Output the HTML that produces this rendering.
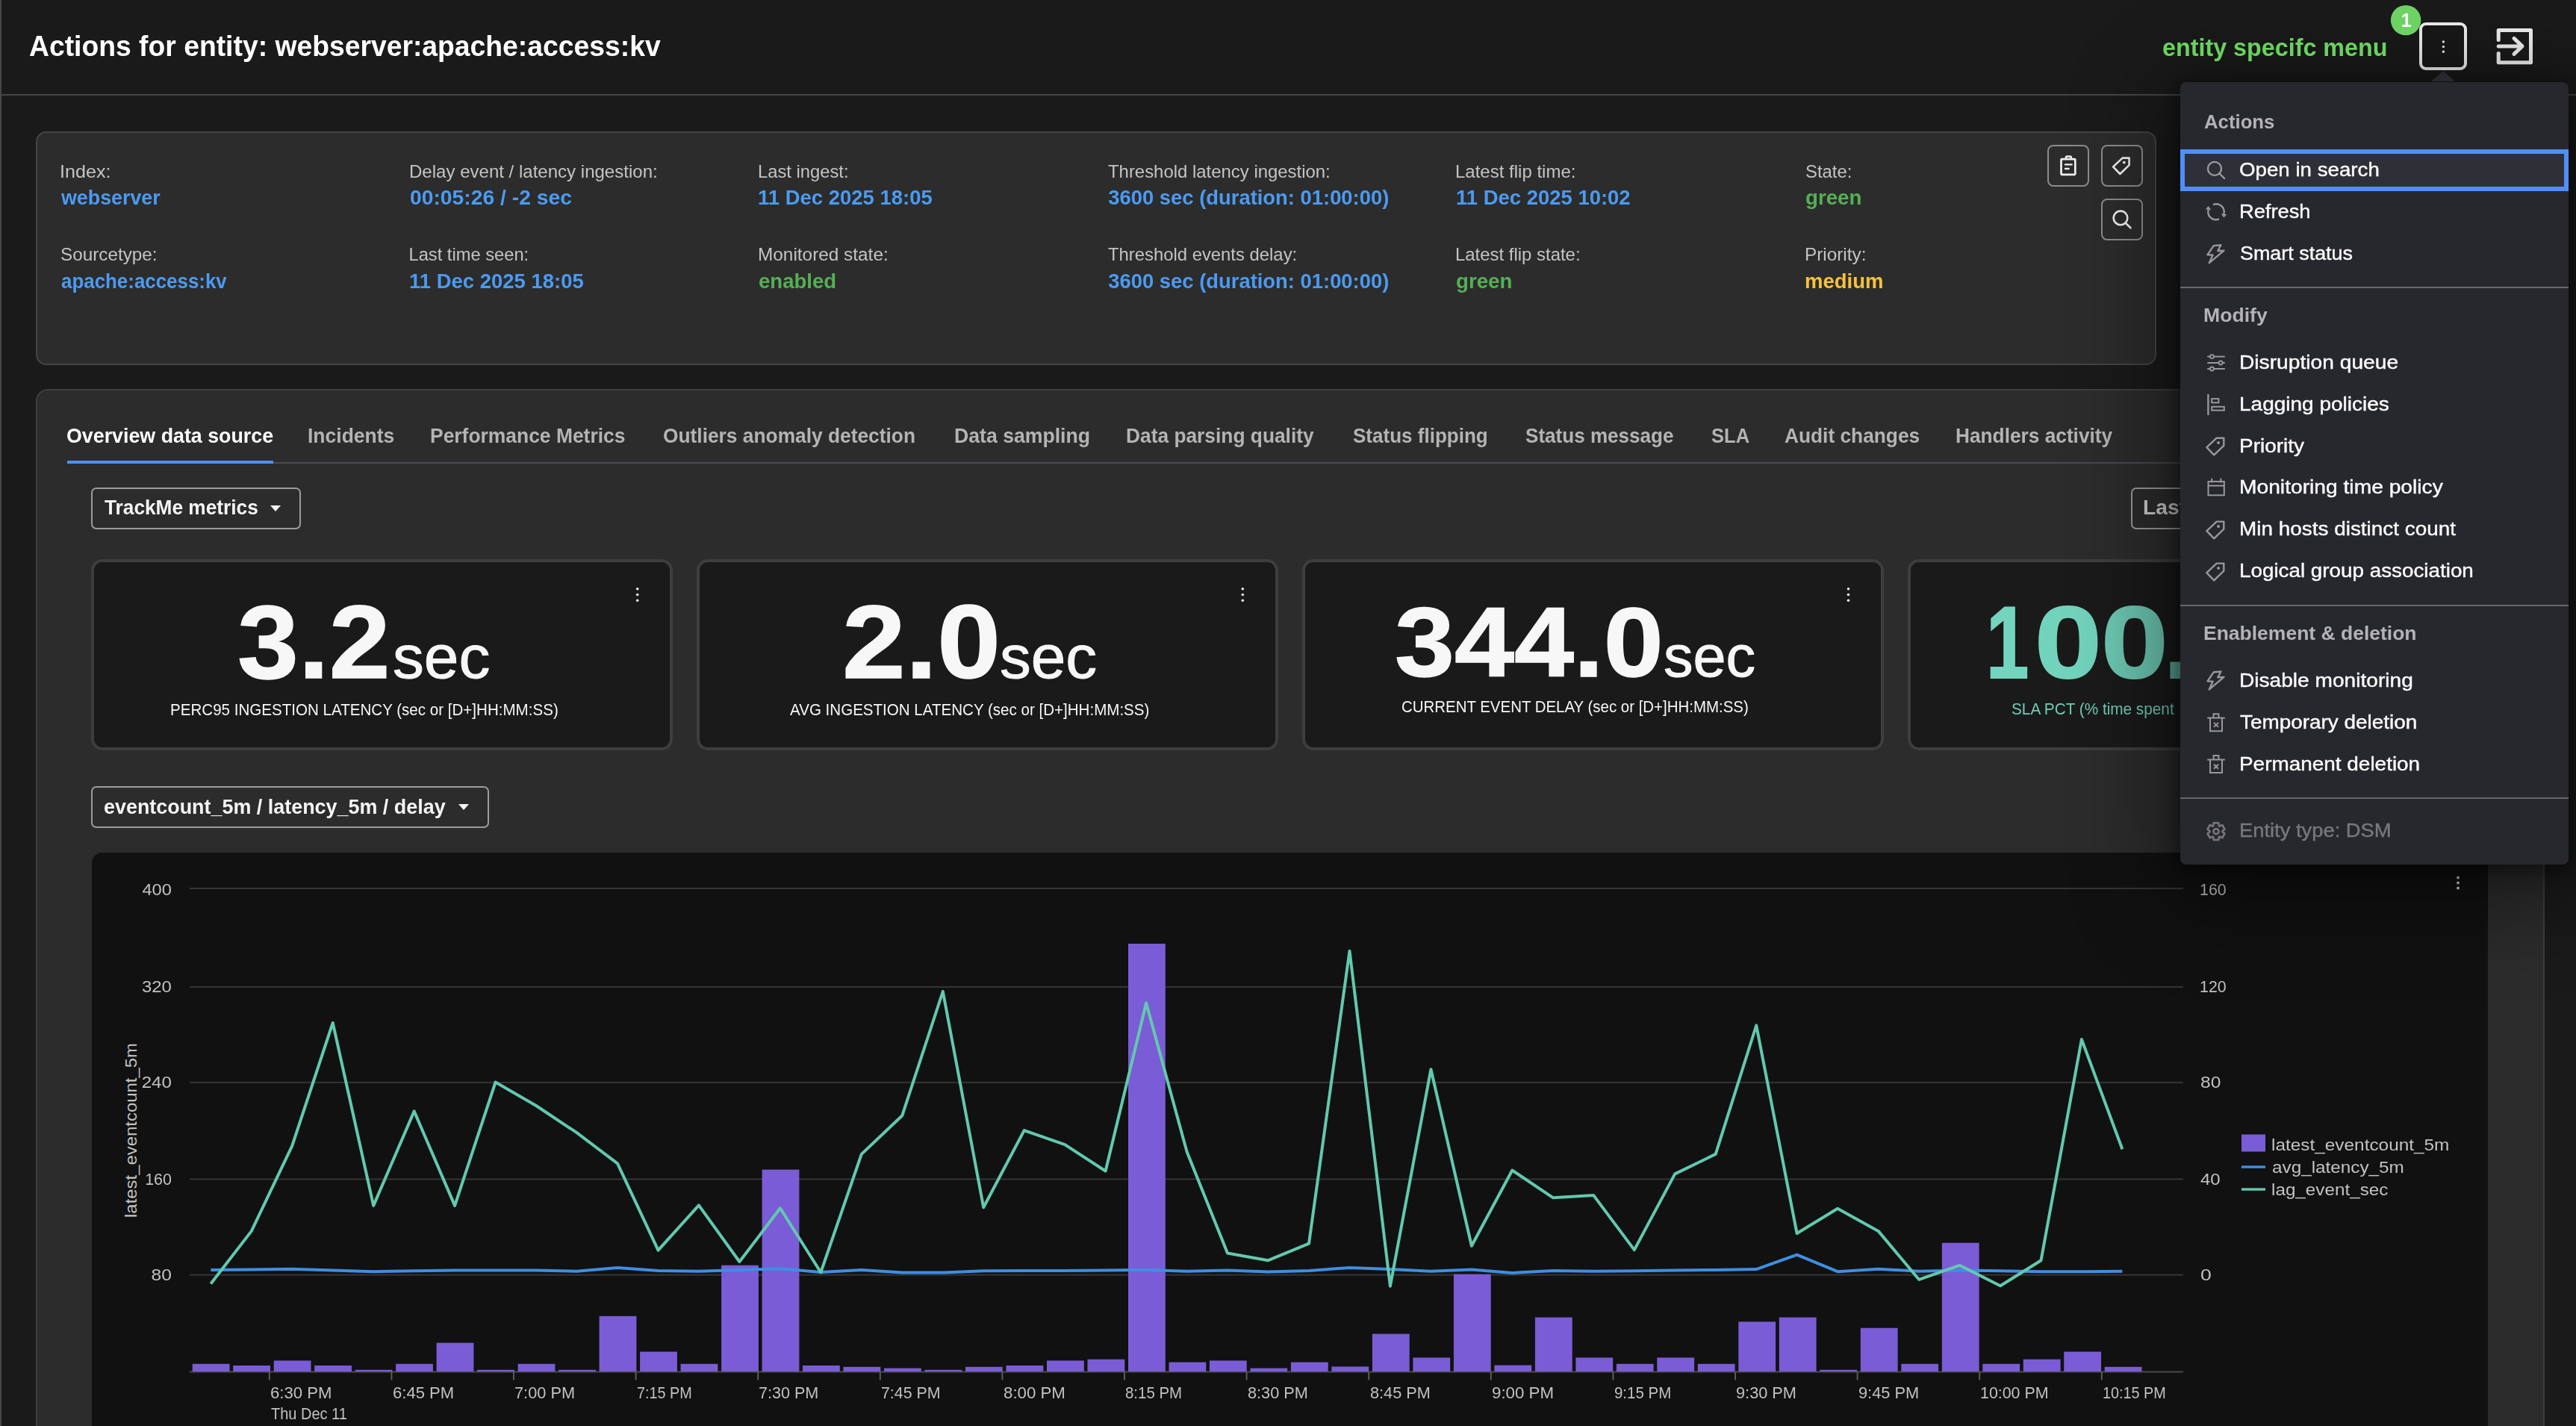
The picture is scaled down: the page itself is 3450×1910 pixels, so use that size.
<!DOCTYPE html><html><head><meta charset="utf-8"><title>Actions for entity</title><style>
html,body{margin:0;padding:0}
body{width:3450px;height:1910px;overflow:hidden;position:relative;background:#1a1a1a;font-family:"Liberation Sans",sans-serif}
.t{position:absolute;white-space:nowrap;line-height:1;display:block}
.b{position:absolute;box-sizing:border-box}
.tl{position:absolute;left:0;top:0;width:3450px;height:1910px;will-change:transform}
.kpi{border:4px solid #3e3e3e;border-radius:15px;background:#1a1a1a;top:749px;height:256px}
.dd{border:2px solid #9c9c9c;border-radius:7px}
.ib{border:2px solid #8c8c8c;border-radius:8px;width:56px;height:56px}
.mdiv{left:2920px;width:520px;height:2px;background:#67686d}
</style></head><body>
<div class="b" style="left:0;top:0;width:2px;height:1910px;background:#484848"></div>
<div class="b" style="left:0;top:126px;width:3450px;height:2px;background:#464646"></div>
<div class="b" style="left:48px;top:176px;width:2840px;height:313px;border:2px solid #444444;border-radius:14px;background:#2c2c2c"></div>
<div class="b ib" style="left:2742px;top:194px"></div><div class="b ib" style="left:2814px;top:194px"></div><div class="b ib" style="left:2814px;top:266px"></div>
<div class="b" style="left:48px;top:521px;width:3360px;height:1500px;border:2px solid #3f3f3f;border-radius:16px;background:#2c2c2c"></div>
<div class="b" style="left:90px;top:619px;width:3276px;height:2px;background:#4a4a52"></div>
<div class="b" style="left:90px;top:617px;width:276px;height:4px;background:#4f8ff7"></div>
<div class="b dd" style="left:122px;top:653px;width:281px;height:56px"></div>
<div class="b" style="left:362px;top:677px;width:0;height:0;border-left:7px solid transparent;border-right:7px solid transparent;border-top:8.5px solid #f5f5f5"></div>
<div class="b dd" style="left:2854px;top:653px;width:300px;height:56px"></div>
<div class="b dd" style="left:122px;top:1053px;width:533px;height:56px"></div>
<div class="b" style="left:613.6px;top:1077px;width:0;height:0;border-left:7px solid transparent;border-right:7px solid transparent;border-top:8.5px solid #f5f5f5"></div>
<div class="b kpi" style="left:122px;width:779px"></div>
<div class="b kpi" style="left:933px;width:779px"></div>
<div class="b kpi" style="left:1744px;width:779px"></div>
<div class="b kpi" style="left:2555px;width:779px"></div>
<div class="b" style="left:123px;top:1142px;width:3209px;height:900px;border-radius:14px;background:#111111"></div>
<svg style="position:absolute;left:0;top:0" width="3450" height="1910" viewBox="0 0 3450 1910"><rect x="253.8" y="1189.0" width="2670.2" height="2" fill="#353535"/><rect x="253.8" y="1320.9" width="2670.2" height="2" fill="#353535"/><rect x="253.8" y="1448.9" width="2670.2" height="2" fill="#353535"/><rect x="253.8" y="1578.4" width="2670.2" height="2" fill="#353535"/><rect x="253.8" y="1706.6" width="2670.2" height="2" fill="#353535"/><rect x="253.8" y="1836.5" width="2670.2" height="2" fill="#4a4a4a"/><rect x="359.8" y="1837.5" width="2" height="11" fill="#5a5a5a"/><rect x="523.4" y="1837.5" width="2" height="11" fill="#5a5a5a"/><rect x="687.0" y="1837.5" width="2" height="11" fill="#5a5a5a"/><rect x="850.6" y="1837.5" width="2" height="11" fill="#5a5a5a"/><rect x="1014.2" y="1837.5" width="2" height="11" fill="#5a5a5a"/><rect x="1177.8" y="1837.5" width="2" height="11" fill="#5a5a5a"/><rect x="1341.4" y="1837.5" width="2" height="11" fill="#5a5a5a"/><rect x="1505.0" y="1837.5" width="2" height="11" fill="#5a5a5a"/><rect x="1668.6" y="1837.5" width="2" height="11" fill="#5a5a5a"/><rect x="1832.2" y="1837.5" width="2" height="11" fill="#5a5a5a"/><rect x="1995.8" y="1837.5" width="2" height="11" fill="#5a5a5a"/><rect x="2159.4" y="1837.5" width="2" height="11" fill="#5a5a5a"/><rect x="2323.0" y="1837.5" width="2" height="11" fill="#5a5a5a"/><rect x="2486.6" y="1837.5" width="2" height="11" fill="#5a5a5a"/><rect x="2650.2" y="1837.5" width="2" height="11" fill="#5a5a5a"/><rect x="2813.8" y="1837.5" width="2" height="11" fill="#5a5a5a"/><rect x="257.7" y="1826.8" width="49.8" height="10.2" fill="#7a5cd6"/><rect x="312.2" y="1829.0" width="49.8" height="8.0" fill="#7a5cd6"/><rect x="366.7" y="1822.4" width="49.8" height="14.6" fill="#7a5cd6"/><rect x="421.2" y="1829.0" width="49.8" height="8.0" fill="#7a5cd6"/><rect x="475.7" y="1834.8" width="49.8" height="2.2" fill="#7a5cd6"/><rect x="530.1" y="1826.8" width="49.8" height="10.2" fill="#7a5cd6"/><rect x="584.6" y="1798.6" width="49.8" height="38.4" fill="#7a5cd6"/><rect x="639.1" y="1834.8" width="49.8" height="2.2" fill="#7a5cd6"/><rect x="693.6" y="1826.8" width="49.8" height="10.2" fill="#7a5cd6"/><rect x="748.1" y="1834.8" width="49.8" height="2.2" fill="#7a5cd6"/><rect x="802.6" y="1762.8" width="49.8" height="74.2" fill="#7a5cd6"/><rect x="857.1" y="1810.5" width="49.8" height="26.5" fill="#7a5cd6"/><rect x="911.6" y="1826.8" width="49.8" height="10.2" fill="#7a5cd6"/><rect x="966.1" y="1694.7" width="49.8" height="142.3" fill="#7a5cd6"/><rect x="1020.6" y="1566.6" width="49.8" height="270.4" fill="#7a5cd6"/><rect x="1075.0" y="1829.0" width="49.8" height="8.0" fill="#7a5cd6"/><rect x="1129.5" y="1830.8" width="49.8" height="6.2" fill="#7a5cd6"/><rect x="1184.0" y="1832.6" width="49.8" height="4.4" fill="#7a5cd6"/><rect x="1238.5" y="1834.8" width="49.8" height="2.2" fill="#7a5cd6"/><rect x="1293.0" y="1830.8" width="49.8" height="6.2" fill="#7a5cd6"/><rect x="1347.5" y="1829.0" width="49.8" height="8.0" fill="#7a5cd6"/><rect x="1402.0" y="1822.4" width="49.8" height="14.6" fill="#7a5cd6"/><rect x="1456.5" y="1820.7" width="49.8" height="16.3" fill="#7a5cd6"/><rect x="1511.0" y="1264.0" width="49.8" height="573.0" fill="#7a5cd6"/><rect x="1565.5" y="1824.6" width="49.8" height="12.4" fill="#7a5cd6"/><rect x="1619.9" y="1822.4" width="49.8" height="14.6" fill="#7a5cd6"/><rect x="1674.4" y="1832.6" width="49.8" height="4.4" fill="#7a5cd6"/><rect x="1728.9" y="1824.6" width="49.8" height="12.4" fill="#7a5cd6"/><rect x="1783.4" y="1830.4" width="49.8" height="6.6" fill="#7a5cd6"/><rect x="1837.9" y="1786.6" width="49.8" height="50.4" fill="#7a5cd6"/><rect x="1892.4" y="1818.4" width="49.8" height="18.6" fill="#7a5cd6"/><rect x="1946.9" y="1706.7" width="49.8" height="130.3" fill="#7a5cd6"/><rect x="2001.4" y="1828.6" width="49.8" height="8.4" fill="#7a5cd6"/><rect x="2055.9" y="1764.5" width="49.8" height="72.5" fill="#7a5cd6"/><rect x="2110.4" y="1818.4" width="49.8" height="18.6" fill="#7a5cd6"/><rect x="2164.8" y="1826.8" width="49.8" height="10.2" fill="#7a5cd6"/><rect x="2219.3" y="1818.4" width="49.8" height="18.6" fill="#7a5cd6"/><rect x="2273.8" y="1826.8" width="49.8" height="10.2" fill="#7a5cd6"/><rect x="2328.3" y="1770.3" width="49.8" height="66.7" fill="#7a5cd6"/><rect x="2382.8" y="1764.5" width="49.8" height="72.5" fill="#7a5cd6"/><rect x="2437.3" y="1834.8" width="49.8" height="2.2" fill="#7a5cd6"/><rect x="2491.8" y="1778.7" width="49.8" height="58.3" fill="#7a5cd6"/><rect x="2546.3" y="1826.8" width="49.8" height="10.2" fill="#7a5cd6"/><rect x="2600.8" y="1664.7" width="49.8" height="172.3" fill="#7a5cd6"/><rect x="2655.3" y="1826.8" width="49.8" height="10.2" fill="#7a5cd6"/><rect x="2709.8" y="1820.7" width="49.8" height="16.3" fill="#7a5cd6"/><rect x="2764.2" y="1810.5" width="49.8" height="26.5" fill="#7a5cd6"/><rect x="2818.7" y="1830.8" width="49.8" height="6.2" fill="#7a5cd6"/><polyline points="282.3,1701.0 336.8,1700.6 391.2,1699.7 445.7,1701.5 500.2,1703.2 554.7,1702.3 609.1,1701.4 663.6,1701.4 718.1,1701.4 772.5,1702.8 827.0,1697.9 881.5,1701.9 935.9,1702.8 990.4,1701.0 1044.9,1699.2 1099.3,1704.0 1153.8,1701.0 1208.3,1704.5 1262.8,1704.5 1317.2,1702.3 1371.7,1701.9 1426.2,1701.9 1480.6,1701.4 1535.1,1701.0 1589.6,1702.8 1644.0,1701.4 1698.5,1703.6 1753.0,1701.9 1807.5,1697.9 1861.9,1700.1 1916.4,1702.8 1970.9,1700.6 2025.3,1705.0 2079.8,1701.9 2134.3,1702.8 2188.8,1702.3 2243.2,1701.4 2297.7,1701.0 2352.2,1700.1 2406.6,1680.7 2461.1,1703.2 2515.6,1699.7 2570.0,1702.8 2624.5,1701.4 2679.0,1702.3 2733.5,1703.2 2787.9,1703.2 2842.4,1702.8" fill="none" stroke="#3d8fe2" stroke-width="4" stroke-linejoin="round"/><polyline points="282.3,1719.5 336.8,1648.9 391.2,1534.9 445.7,1370.0 500.2,1614.9 554.7,1488.4 609.1,1614.9 663.6,1449.5 718.1,1481.0 772.5,1517.2 827.0,1558.3 881.5,1674.6 935.9,1614.3 990.4,1690.0 1044.9,1618.3 1099.3,1704.2 1153.8,1545.9 1208.3,1494.2 1262.8,1328.0 1317.2,1617.2 1371.7,1514.1 1426.2,1533.1 1480.6,1568.5 1535.1,1343.5 1589.6,1542.8 1644.0,1678.5 1698.5,1688.2 1753.0,1665.6 1807.5,1273.7 1861.9,1722.7 1916.4,1432.3 1970.9,1668.8 2025.3,1567.5 2079.8,1604.2 2134.3,1601.1 2188.8,1674.1 2243.2,1572.4 2297.7,1545.9 2352.2,1373.5 2406.6,1652.0 2461.1,1618.7 2515.6,1648.9 2570.0,1713.8 2624.5,1694.8 2679.0,1722.3 2733.5,1688.2 2787.9,1392.1 2842.4,1539.3" fill="none" stroke="#62c9ae" stroke-width="4" stroke-linejoin="round"/><rect x="3002" y="1519.5" width="32" height="23" fill="#7a5cd6"/><rect x="3002" y="1561.3" width="32" height="3.4" fill="#3d8fe2"/><rect x="3002" y="1591.3" width="32" height="3.4" fill="#62c9ae"/><circle cx="3292" cy="1175.5" r="1.9" fill="#d8d8d8"/><circle cx="3292" cy="1182.5" r="1.9" fill="#d8d8d8"/><circle cx="3292" cy="1189.5" r="1.9" fill="#d8d8d8"/></svg>
<span class="t" id="ytitle" style="left:176.8px;top:1513.7px;font-size:21.5px;color:#c2c2c2;transform:translate(-50%,-50%) rotate(-90deg) scaleX(1.1119);transform-origin:50% 50%">latest_eventcount_5m</span>
<svg style="position:absolute;left:0;top:0" width="3450" height="1910" viewBox="0 0 3450 1910"><rect x="2760.5" y="213.1" width="18.8" height="20.7" rx="1" fill="none" stroke="#f0f0f0" stroke-width="2.7" stroke-linejoin="round"/><path d="M2766.9 213 v-2 a1.4 1.4 0 0 1 1.4 -1.4 h4.2 a1.4 1.4 0 0 1 1.4 1.4 v2" fill="none" stroke="#f0f0f0" stroke-width="2.5" stroke-linejoin="round"/><line x1="2766" y1="220.4" x2="2774.6" y2="220.4" stroke="#f0f0f0" stroke-width="2.4" stroke-linecap="round"/><line x1="2766" y1="226" x2="2770.6" y2="226" stroke="#f0f0f0" stroke-width="2.4" stroke-linecap="round"/><polygon points="2851.6,211.6 2851.6,221.1 2839.3,233.0 2830.1,223.4 2842.6,211.6" fill="none" stroke="#f0f0f0" stroke-width="2.6" stroke-linejoin="round"/><circle cx="2844.8" cy="217.6" r="1.9" fill="#f0f0f0"/><circle cx="2840" cy="291.9" r="9.3" fill="none" stroke="#f0f0f0" stroke-width="2.6"/><line x1="2846.7" y1="298.7" x2="2853.5" y2="305.3" stroke="#f0f0f0" stroke-width="2.6" stroke-linecap="round"/><circle cx="853.7" cy="788.8" r="1.8" fill="#f0f0f0"/><circle cx="853.7" cy="796.5" r="1.8" fill="#f0f0f0"/><circle cx="853.7" cy="804.2" r="1.8" fill="#f0f0f0"/><circle cx="1664.3" cy="788.8" r="1.8" fill="#f0f0f0"/><circle cx="1664.3" cy="796.5" r="1.8" fill="#f0f0f0"/><circle cx="1664.3" cy="804.2" r="1.8" fill="#f0f0f0"/><circle cx="2475.5" cy="788.8" r="1.8" fill="#f0f0f0"/><circle cx="2475.5" cy="796.5" r="1.8" fill="#f0f0f0"/><circle cx="2475.5" cy="804.2" r="1.8" fill="#f0f0f0"/></svg>
<svg style="position:absolute;left:0;top:0" width="3450" height="1910" viewBox="0 0 3450 1910"><rect x="3242" y="32" width="60" height="60" rx="7" ry="7" fill="#181818" stroke="#f0f0f0" stroke-width="4"/><circle cx="3272.4" cy="56.0" r="1.7" fill="#ececec"/><circle cx="3272.4" cy="62.6" r="1.7" fill="#ececec"/><circle cx="3272.4" cy="69.2" r="1.7" fill="#ececec"/><path d="M3346.2 53.4 V40.5 H3389.5 V83.8 H3346.2 V71.5" fill="none" stroke="#f0f0f0" stroke-width="5" stroke-linejoin="round" stroke-linecap="round"/><path d="M3346.2 61.9 H3376.5 M3367 51.4 L3378 61.9 L3367 72.4" fill="none" stroke="#f0f0f0" stroke-width="5" stroke-linejoin="round" stroke-linecap="round"/></svg>
<div class="tl"><span class="t" id="t0" style="top:42.0px;font-size:39px;color:#ffffff;font-weight:700;left:38.6px;transform-origin:0 0;transform:scaleX(0.9562);">Actions for entity: webserver:apache:access:kv</span>
<span class="t" id="t2" style="top:218.6px;font-size:23.7px;color:#c4c4c4;left:79.7px;transform-origin:0 0;transform:scaleX(1.0602);">Index:</span>
<span class="t" id="t3" style="top:330.2px;font-size:23.7px;color:#c4c4c4;left:80.9px;transform-origin:0 0;transform:scaleX(1.0253);">Sourcetype:</span>
<span class="t" id="t4" style="top:251.0px;font-size:27.4px;color:#4a9bf3;font-weight:700;left:82.3px;transform-origin:0 0;transform:scaleX(0.9793);">webserver</span>
<span class="t" id="t5" style="top:362.6px;font-size:27.4px;color:#4a9bf3;font-weight:700;left:81.5px;transform-origin:0 0;transform:scaleX(0.9456);">apache:access:kv</span>
<span class="t" id="t6" style="top:218.6px;font-size:23.7px;color:#c4c4c4;left:547.5px;transform-origin:0 0;transform:scaleX(1.0147);">Delay event / latency ingestion:</span>
<span class="t" id="t7" style="top:330.2px;font-size:23.7px;color:#c4c4c4;left:547.5px;transform-origin:0 0;">Last time seen:</span>
<span class="t" id="t8" style="top:251.0px;font-size:27.4px;color:#4a9bf3;font-weight:700;left:548.5px;transform-origin:0 0;transform:scaleX(1.0323);">00:05:26 / -2 sec</span>
<span class="t" id="t9" style="top:362.6px;font-size:27.4px;color:#4a9bf3;font-weight:700;left:547.7px;transform-origin:0 0;transform:scaleX(1.0034);">11 Dec 2025 18:05</span>
<span class="t" id="t10" style="top:218.6px;font-size:23.7px;color:#c4c4c4;left:1015.0px;transform-origin:0 0;transform:scaleX(1.0032);">Last ingest:</span>
<span class="t" id="t11" style="top:330.2px;font-size:23.7px;color:#c4c4c4;left:1014.9px;transform-origin:0 0;transform:scaleX(1.0286);">Monitored state:</span>
<span class="t" id="t12" style="top:251.0px;font-size:27.4px;color:#4a9bf3;font-weight:700;left:1015.2px;transform-origin:0 0;transform:scaleX(1.0030);">11 Dec 2025 18:05</span>
<span class="t" id="t13" style="top:362.6px;font-size:27.4px;color:#53b153;font-weight:700;left:1016.0px;transform-origin:0 0;transform:scaleX(1.0057);">enabled</span>
<span class="t" id="t14" style="top:218.6px;font-size:23.7px;color:#c4c4c4;left:1484.2px;transform-origin:0 0;transform:scaleX(1.0095);">Threshold latency ingestion:</span>
<span class="t" id="t15" style="top:330.2px;font-size:23.7px;color:#c4c4c4;left:1484.2px;transform-origin:0 0;transform:scaleX(1.0067);">Threshold events delay:</span>
<span class="t" id="t16" style="top:251.0px;font-size:27.4px;color:#4a9bf3;font-weight:700;left:1484.3px;transform-origin:0 0;">3600 sec (duration: 01:00:00)</span>
<span class="t" id="t17" style="top:362.6px;font-size:27.4px;color:#4a9bf3;font-weight:700;left:1484.3px;transform-origin:0 0;">3600 sec (duration: 01:00:00)</span>
<span class="t" id="t18" style="top:218.6px;font-size:23.7px;color:#c4c4c4;left:1949.4px;transform-origin:0 0;transform:scaleX(1.0135);">Latest flip time:</span>
<span class="t" id="t19" style="top:330.2px;font-size:23.7px;color:#c4c4c4;left:1949.4px;transform-origin:0 0;transform:scaleX(1.0098);">Latest flip state:</span>
<span class="t" id="t20" style="top:251.0px;font-size:27.4px;color:#4a9bf3;font-weight:700;left:1949.6px;transform-origin:0 0;transform:scaleX(1.0026);">11 Dec 2025 10:02</span>
<span class="t" id="t21" style="top:362.6px;font-size:27.4px;color:#53b153;font-weight:700;left:1950.4px;transform-origin:0 0;transform:scaleX(1.0106);">green</span>
<span class="t" id="t22" style="top:218.6px;font-size:23.7px;color:#c4c4c4;left:2417.9px;transform-origin:0 0;transform:scaleX(1.0062);">State:</span>
<span class="t" id="t23" style="top:330.2px;font-size:23.7px;color:#c4c4c4;left:2416.9px;transform-origin:0 0;transform:scaleX(1.0271);">Priority:</span>
<span class="t" id="t24" style="top:251.0px;font-size:27.4px;color:#53b153;font-weight:700;left:2418.0px;transform-origin:0 0;transform:scaleX(1.0106);">green</span>
<span class="t" id="t25" style="top:362.6px;font-size:27.4px;color:#f8c13a;font-weight:700;left:2417.2px;transform-origin:0 0;transform:scaleX(1.0043);">medium</span>
<span class="t" id="t26" style="top:569.5px;font-size:27.5px;color:#ffffff;font-weight:700;left:89.3px;transform-origin:0 0;transform:scaleX(0.9747);">Overview data source</span>
<span class="t" id="t27" style="top:569.5px;font-size:27.5px;color:#b4b4b4;font-weight:700;left:412.0px;transform-origin:0 0;transform:scaleX(0.9636);">Incidents</span>
<span class="t" id="t28" style="top:569.5px;font-size:27.5px;color:#b4b4b4;font-weight:700;left:576.0px;transform-origin:0 0;transform:scaleX(0.9609);">Performance Metrics</span>
<span class="t" id="t29" style="top:569.5px;font-size:27.5px;color:#b4b4b4;font-weight:700;left:888.4px;transform-origin:0 0;transform:scaleX(0.9575);">Outliers anomaly detection</span>
<span class="t" id="t30" style="top:569.5px;font-size:27.5px;color:#b4b4b4;font-weight:700;left:1277.7px;transform-origin:0 0;transform:scaleX(0.9686);">Data sampling</span>
<span class="t" id="t31" style="top:569.5px;font-size:27.5px;color:#b4b4b4;font-weight:700;left:1508.1px;transform-origin:0 0;transform:scaleX(0.9575);">Data parsing quality</span>
<span class="t" id="t32" style="top:569.5px;font-size:27.5px;color:#b4b4b4;font-weight:700;left:1812.0px;transform-origin:0 0;transform:scaleX(0.9466);">Status flipping</span>
<span class="t" id="t33" style="top:569.5px;font-size:27.5px;color:#b4b4b4;font-weight:700;left:2042.9px;transform-origin:0 0;transform:scaleX(0.9481);">Status message</span>
<span class="t" id="t34" style="top:569.5px;font-size:27.5px;color:#b4b4b4;font-weight:700;left:2291.5px;transform-origin:0 0;transform:scaleX(0.9286);">SLA</span>
<span class="t" id="t35" style="top:569.5px;font-size:27.5px;color:#b4b4b4;font-weight:700;left:2389.5px;transform-origin:0 0;transform:scaleX(0.9562);">Audit changes</span>
<span class="t" id="t36" style="top:569.5px;font-size:27.5px;color:#b4b4b4;font-weight:700;left:2618.6px;transform-origin:0 0;transform:scaleX(0.9549);">Handlers activity</span>
<span class="t" id="t37" style="top:667.0px;font-size:27px;color:#f5f5f5;font-weight:700;left:140.2px;transform-origin:0 0;transform:scaleX(0.9723);">TrackMe metrics</span>
<span class="t" id="t38" style="top:667.4px;font-size:27px;color:#d0d0d0;font-weight:700;left:2870.4px;transform-origin:0 0;transform:scaleX(1.0468);">Last</span>
<span class="t" id="t39" style="top:1068.0px;font-size:27px;color:#f5f5f5;font-weight:700;left:139.3px;transform-origin:0 0;transform:scaleX(0.9965);">eventcount_5m / latency_5m / delay</span>
<span class="t" id="t40" style="top:790.2px;font-size:139px;color:#f7f7f7;font-weight:700;left:317.7px;transform-origin:0 0;transform:scaleX(1.0588);-webkit-text-stroke:1.4px #f7f7f7;">3.2</span>
<span class="t" id="t41" style="top:839.4px;font-size:82px;color:#f7f7f7;left:526.1px;transform-origin:0 0;transform:scaleX(1.0211);-webkit-text-stroke:1px #f7f7f7;">sec</span>
<span class="t" id="t42" style="top:939.8px;font-size:22.3px;color:#f7f7f7;left:227.5px;transform-origin:0 0;transform:scaleX(0.9223);">PERC95 INGESTION LATENCY (sec or [D+]HH:MM:SS)</span>
<span class="t" id="t43" style="top:790.2px;font-size:139px;color:#f7f7f7;font-weight:700;left:1127.6px;transform-origin:0 0;transform:scaleX(1.0968);-webkit-text-stroke:1.4px #f7f7f7;">2.0</span>
<span class="t" id="t44" style="top:839.4px;font-size:82px;color:#f7f7f7;left:1338.6px;transform-origin:0 0;transform:scaleX(1.0195);-webkit-text-stroke:1px #f7f7f7;">sec</span>
<span class="t" id="t45" style="top:939.8px;font-size:22.3px;color:#f7f7f7;left:1058.2px;transform-origin:0 0;transform:scaleX(0.9218);">AVG INGESTION LATENCY (sec or [D+]HH:MM:SS)</span>
<span class="t" id="t46" style="top:794.6px;font-size:131px;color:#f7f7f7;font-weight:700;left:1868.4px;transform-origin:0 0;transform:scaleX(1.0974);-webkit-text-stroke:1.4px #f7f7f7;">344.0</span>
<span class="t" id="t47" style="top:840.6px;font-size:77px;color:#f7f7f7;left:2227.8px;transform-origin:0 0;transform:scaleX(1.0269);-webkit-text-stroke:1px #f7f7f7;">sec</span>
<span class="t" id="t48" style="top:936.0px;font-size:22.3px;color:#f7f7f7;left:1876.9px;transform-origin:0 0;transform:scaleX(0.9167);">CURRENT EVENT DELAY (sec or [D+]HH:MM:SS)</span>
<span class="t" id="t49" style="top:792.4px;font-size:137px;color:#74d5be;font-weight:700;left:2660.2px;transform-origin:0 0;transform:scaleX(0.7513);-webkit-text-stroke:2px #74d5be;">1</span>
<span class="t" id="t50" style="top:792.4px;font-size:137px;color:#72d3bc;font-weight:700;left:2724.9px;transform-origin:0 0;transform:scaleX(1.1781);-webkit-text-stroke:2px #72d3bc;">0</span>
<span class="t" id="t51" style="top:792.4px;font-size:137px;color:#6cc8b2;font-weight:700;left:2814.0px;transform-origin:0 0;transform:scaleX(1.1767);-webkit-text-stroke:2px #6cc8b2;">0</span>
<span class="t" id="t52" style="top:792.4px;font-size:137px;color:#62b8a3;font-weight:700;left:2899.1px;transform-origin:0 0;transform:scaleX(0.9049);-webkit-text-stroke:2px #62b8a3;">.</span>
<span class="t" id="t53" style="top:939.0px;font-size:22.3px;color:#6fcdb6;left:2694.0px;transform-origin:0 0;transform:scaleX(0.9309);">SLA PCT (% time spent</span>
<span class="t" id="t54" style="top:1182.0px;font-size:21.5px;color:#c2c2c2;right:3219.8px;transform-origin:100% 0;transform:scaleX(1.1010);">400</span>
<span class="t" id="t55" style="top:1312.1px;font-size:21.5px;color:#c2c2c2;right:3219.7px;transform-origin:100% 0;transform:scaleX(1.1139);">320</span>
<span class="t" id="t56" style="top:1440.1px;font-size:21.5px;color:#c2c2c2;right:3219.7px;transform-origin:100% 0;transform:scaleX(1.1205);">240</span>
<span class="t" id="t57" style="top:1569.6px;font-size:21.5px;color:#c2c2c2;right:3219.8px;transform-origin:100% 0;transform:scaleX(0.9936);">160</span>
<span class="t" id="t58" style="top:1697.8px;font-size:21.5px;color:#c2c2c2;right:3219.7px;transform-origin:100% 0;transform:scaleX(1.1425);">80</span>
<span class="t" id="t59" style="top:1182.0px;font-size:21.5px;color:#c2c2c2;left:2946.2px;transform-origin:0 0;transform:scaleX(0.9936);">160</span>
<span class="t" id="t60" style="top:1312.1px;font-size:21.5px;color:#c2c2c2;left:2946.2px;transform-origin:0 0;transform:scaleX(0.9936);">120</span>
<span class="t" id="t61" style="top:1440.1px;font-size:21.5px;color:#c2c2c2;left:2946.8px;transform-origin:0 0;transform:scaleX(1.1425);">80</span>
<span class="t" id="t62" style="top:1569.6px;font-size:21.5px;color:#c2c2c2;left:2947.3px;transform-origin:0 0;transform:scaleX(1.1172);">40</span>
<span class="t" id="t63" style="top:1697.8px;font-size:21.5px;color:#c2c2c2;left:2946.8px;transform-origin:0 0;transform:scaleX(1.2353);">0</span>
<span class="t" id="t64" style="top:1856.3px;font-size:21.5px;color:#c2c2c2;left:362.0px;transform-origin:0 0;transform:scaleX(1.0303);">6:30 PM</span>
<span class="t" id="t65" style="top:1856.3px;font-size:21.5px;color:#c2c2c2;left:525.6px;transform-origin:0 0;transform:scaleX(1.0265);">6:45 PM</span>
<span class="t" id="t66" style="top:1856.3px;font-size:21.5px;color:#c2c2c2;left:689.1px;transform-origin:0 0;transform:scaleX(1.0122);">7:00 PM</span>
<span class="t" id="t67" style="top:1856.3px;font-size:21.5px;color:#c2c2c2;left:852.8px;transform-origin:0 0;transform:scaleX(0.9214);">7:15 PM</span>
<span class="t" id="t68" style="top:1856.3px;font-size:21.5px;color:#c2c2c2;left:1016.3px;transform-origin:0 0;transform:scaleX(1.0031);">7:30 PM</span>
<span class="t" id="t69" style="top:1856.3px;font-size:21.5px;color:#c2c2c2;left:1179.9px;transform-origin:0 0;transform:scaleX(0.9927);">7:45 PM</span>
<span class="t" id="t70" style="top:1856.3px;font-size:21.5px;color:#c2c2c2;left:1343.7px;transform-origin:0 0;transform:scaleX(1.0355);">8:00 PM</span>
<span class="t" id="t71" style="top:1856.3px;font-size:21.5px;color:#c2c2c2;left:1507.3px;transform-origin:0 0;transform:scaleX(0.9501);">8:15 PM</span>
<span class="t" id="t72" style="top:1856.3px;font-size:21.5px;color:#c2c2c2;left:1670.9px;transform-origin:0 0;transform:scaleX(1.0096);">8:30 PM</span>
<span class="t" id="t73" style="top:1856.3px;font-size:21.5px;color:#c2c2c2;left:1834.5px;transform-origin:0 0;transform:scaleX(1.0096);">8:45 PM</span>
<span class="t" id="t74" style="top:1856.3px;font-size:21.5px;color:#c2c2c2;left:1998.0px;transform-origin:0 0;transform:scaleX(1.0368);">9:00 PM</span>
<span class="t" id="t75" style="top:1856.3px;font-size:21.5px;color:#c2c2c2;left:2161.7px;transform-origin:0 0;transform:scaleX(0.9513);">9:15 PM</span>
<span class="t" id="t76" style="top:1856.3px;font-size:21.5px;color:#c2c2c2;left:2325.2px;transform-origin:0 0;transform:scaleX(1.0109);">9:30 PM</span>
<span class="t" id="t77" style="top:1856.3px;font-size:21.5px;color:#c2c2c2;left:2488.8px;transform-origin:0 0;transform:scaleX(1.0135);">9:45 PM</span>
<span class="t" id="t78" style="top:1856.3px;font-size:21.5px;color:#c2c2c2;left:2651.8px;transform-origin:0 0;transform:scaleX(0.9942);">10:00 PM</span>
<span class="t" id="t79" style="top:1856.3px;font-size:21.5px;color:#c2c2c2;left:2815.5px;transform-origin:0 0;transform:scaleX(0.9207);">10:15 PM</span>
<span class="t" id="t80" style="top:1884.0px;font-size:21.5px;color:#c2c2c2;left:363.1px;transform-origin:0 0;transform:scaleX(0.9288);">Thu Dec 11</span>
<span class="t" id="t81" style="top:1523.5px;font-size:21.5px;color:#c2c2c2;left:3042.3px;transform-origin:0 0;transform:scaleX(1.1333);">latest_eventcount_5m</span>
<span class="t" id="t82" style="top:1553.5px;font-size:21.5px;color:#c2c2c2;left:3042.9px;transform-origin:0 0;transform:scaleX(1.1294);">avg_latency_5m</span>
<span class="t" id="t83" style="top:1583.5px;font-size:21.5px;color:#c2c2c2;left:3042.3px;transform-origin:0 0;transform:scaleX(1.1281);">lag_event_sec</span></div>
<div class="b" style="left:2920px;top:110px;width:520px;height:1048px;border-radius:8px;background:#27282e;box-shadow:0 26px 120px 26px rgba(0,0,0,0.45),0 5px 26px 4px rgba(0,0,0,0.45)"></div>
<div class="b" style="left:3255.8px;top:95.4px;width:0;height:0;border-left:16px solid transparent;border-right:16px solid transparent;border-bottom:14.8px solid #27282e"></div>
<div class="b" style="left:2920px;top:200px;width:520px;height:56px;border:6px solid #4f8ff7;background:#2f3037"></div>
<div class="b mdiv" style="top:384px"></div>
<div class="b mdiv" style="top:810px"></div>
<div class="b mdiv" style="top:1068px"></div>
<svg style="position:absolute;left:0;top:0" width="3450" height="1910" viewBox="0 0 3450 1910"><circle cx="3222.1" cy="27.1" r="20.2" fill="#6dd263"/><circle cx="2966" cy="225.9" r="9.0" fill="none" stroke="#9c9c9e" stroke-width="2.3"/><line x1="2972.5" y1="232.5" x2="2979.1" y2="238.9" stroke="#9c9c9e" stroke-width="2.3" stroke-linecap="round"/><path d="M2957.4 285.8 A 10.6 10.6 0 0 0 2972.0 293.4" fill="none" stroke="#98989a" stroke-width="2.4"/><path d="M2978.6 281.8 A 10.6 10.6 0 0 0 2964.0 274.2" fill="none" stroke="#98989a" stroke-width="2.4"/><path d="M2953.8 280.3 l3.8 -4.2 l3.8 5.2 z" fill="#98989a"/><path d="M2982.2 287.3 l-3.8 4.2 l-3.8 -5.2 z" fill="#98989a"/><path d="M2957.4 285.8 A 10.6 10.6 0 0 1 2957.7 280.8" fill="none" stroke="#98989a" stroke-width="2.4"/><path d="M2978.6 281.8 A 10.6 10.6 0 0 1 2978.3 286.8" fill="none" stroke="#98989a" stroke-width="2.4"/><polygon points="2964.7,329.1 2974.4,328.3 2970.3,336.0 2978.5,335.7 2958.8,352.2 2963.6,341.5 2956.5,341.2" fill="none" stroke="#98989a" stroke-width="2.4" stroke-linejoin="round"/><polygon points="2964.7,900.3 2974.4,899.5 2970.3,907.2 2978.5,906.9 2958.8,923.4 2963.6,912.7 2956.5,912.4" fill="none" stroke="#98989a" stroke-width="2.4" stroke-linejoin="round"/><line x1="2956.2" y1="477.6" x2="2979.8" y2="477.6" stroke="#98989a" stroke-width="2"/><circle cx="2962.4" cy="477.6" r="2.5" fill="#27282e" stroke="#98989a" stroke-width="1.9"/><line x1="2956.2" y1="486" x2="2979.8" y2="486" stroke="#98989a" stroke-width="2"/><circle cx="2974.1" cy="486" r="2.5" fill="#27282e" stroke="#98989a" stroke-width="1.9"/><line x1="2956.2" y1="494" x2="2979.8" y2="494" stroke="#98989a" stroke-width="2"/><circle cx="2962.4" cy="494" r="2.5" fill="#27282e" stroke="#98989a" stroke-width="1.9"/><line x1="2957.4" y1="528.9" x2="2957.4" y2="555.1" stroke="#98989a" stroke-width="2.4" stroke-linecap="round"/><rect x="2962.2" y="534.1" width="9.2" height="5.2" fill="none" stroke="#98989a" stroke-width="2"/><rect x="2962.2" y="544.8" width="16.6" height="4.8" fill="none" stroke="#98989a" stroke-width="2"/><polygon points="2978.3,586.7 2978.3,596.8 2965.2,609.4 2955.4,599.2 2968.7,586.7" fill="none" stroke="#98989a" stroke-width="2.4" stroke-linejoin="round"/><circle cx="2971.1" cy="593.0" r="2.0" fill="#98989a"/><polygon points="2978.3,698.6 2978.3,708.7 2965.2,721.3 2955.4,711.1 2968.7,698.6" fill="none" stroke="#98989a" stroke-width="2.4" stroke-linejoin="round"/><circle cx="2971.1" cy="704.9" r="2.0" fill="#98989a"/><polygon points="2978.3,754.6 2978.3,764.7 2965.2,777.3 2955.4,767.1 2968.7,754.6" fill="none" stroke="#98989a" stroke-width="2.4" stroke-linejoin="round"/><circle cx="2971.1" cy="760.9" r="2.0" fill="#98989a"/><rect x="2957.5" y="645" width="21.3" height="18.3" fill="none" stroke="#98989a" stroke-width="2"/><line x1="2957.5" y1="650.6" x2="2978.8" y2="650.6" stroke="#98989a" stroke-width="2"/><line x1="2962.2" y1="640.7" x2="2962.2" y2="646.5" stroke="#98989a" stroke-width="2"/><line x1="2974.3" y1="640.7" x2="2974.3" y2="646.5" stroke="#98989a" stroke-width="2"/><line x1="2956.2" y1="961.6" x2="2979.8" y2="961.6" stroke="#98989a" stroke-width="2"/><path d="M2964.6 961.6 v-5.4 h6.8 v5.4" fill="none" stroke="#98989a" stroke-width="2"/><path d="M2960 961.6 v17.6 h16 v-17.6" fill="none" stroke="#98989a" stroke-width="2"/><path d="M2965 967.9 l6 6 m0 -6 l-6 6" fill="none" stroke="#98989a" stroke-width="2"/><line x1="2956.2" y1="1017.5" x2="2979.8" y2="1017.5" stroke="#98989a" stroke-width="2"/><path d="M2964.6 1017.5 v-5.4 h6.8 v5.4" fill="none" stroke="#98989a" stroke-width="2"/><path d="M2960 1017.5 v17.6 h16 v-17.6" fill="none" stroke="#98989a" stroke-width="2"/><path d="M2965 1023.8 l6 6 m0 -6 l-6 6" fill="none" stroke="#98989a" stroke-width="2"/><polygon points="2964.7,1102.2 2971.3,1102.2 2971.8,1106.1 2972.6,1106.6 2976.3,1105.0 2979.5,1110.7 2976.4,1113.2 2976.4,1114.0 2979.5,1116.5 2976.3,1122.2 2972.6,1120.6 2971.8,1121.1 2971.3,1125.0 2964.7,1125.0 2964.2,1121.1 2963.4,1120.6 2959.7,1122.2 2956.5,1116.5 2959.6,1114.0 2959.6,1113.2 2956.5,1110.7 2959.7,1105.0 2963.4,1106.6 2964.2,1106.1" fill="none" stroke="#77777a" stroke-width="2.6" stroke-linejoin="round"/><circle cx="2968" cy="1113.6" r="3.5" fill="none" stroke="#77777a" stroke-width="2.6"/></svg>
<div class="tl"><span class="t" id="t1" style="top:46.1px;font-size:34px;color:#6ad15f;font-weight:700;left:2895.6px;transform-origin:0 0;transform:scaleX(0.9497);">entity specifc menu</span>
<span class="t" id="t84" style="top:150.7px;font-size:25.5px;color:#b3b3b5;font-weight:700;left:2951.7px;transform-origin:0 0;transform:scaleX(1.0095);">Actions</span>
<span class="t" id="t85" style="top:409.5px;font-size:25.5px;color:#b3b3b5;font-weight:700;left:2951.3px;transform-origin:0 0;transform:scaleX(1.0440);">Modify</span>
<span class="t" id="t86" style="top:835.5px;font-size:25.5px;color:#b3b3b5;font-weight:700;left:2951.3px;transform-origin:0 0;transform:scaleX(1.0387);">Enablement &amp; deletion</span>
<span class="t" id="t87" style="top:214.2px;font-size:26px;color:#fbfbfb;left:2999.4px;transform-origin:0 0;transform:scaleX(1.0653);-webkit-text-stroke:0.4px #fbfbfb;">Open in search</span>
<span class="t" id="t88" style="top:269.7px;font-size:26px;color:#fbfbfb;left:2998.6px;transform-origin:0 0;transform:scaleX(1.0485);-webkit-text-stroke:0.4px #fbfbfb;">Refresh</span>
<span class="t" id="t89" style="top:325.7px;font-size:26px;color:#fbfbfb;left:2999.9px;transform-origin:0 0;transform:scaleX(1.0345);-webkit-text-stroke:0.4px #fbfbfb;">Smart status</span>
<span class="t" id="t90" style="top:471.9px;font-size:26px;color:#fbfbfb;left:2998.5px;transform-origin:0 0;transform:scaleX(1.0842);-webkit-text-stroke:0.4px #fbfbfb;">Disruption queue</span>
<span class="t" id="t91" style="top:527.8px;font-size:26px;color:#fbfbfb;left:2998.5px;transform-origin:0 0;transform:scaleX(1.0771);-webkit-text-stroke:0.4px #fbfbfb;">Lagging policies</span>
<span class="t" id="t92" style="top:583.5px;font-size:26px;color:#fbfbfb;left:2998.5px;transform-origin:0 0;transform:scaleX(1.0751);-webkit-text-stroke:0.4px #fbfbfb;">Priority</span>
<span class="t" id="t93" style="top:639.4px;font-size:26px;color:#fbfbfb;left:2998.5px;transform-origin:0 0;transform:scaleX(1.0849);-webkit-text-stroke:0.4px #fbfbfb;">Monitoring time policy</span>
<span class="t" id="t94" style="top:695.4px;font-size:26px;color:#fbfbfb;left:2998.5px;transform-origin:0 0;transform:scaleX(1.0734);-webkit-text-stroke:0.4px #fbfbfb;">Min hosts distinct count</span>
<span class="t" id="t95" style="top:751.4px;font-size:26px;color:#fbfbfb;left:2998.5px;transform-origin:0 0;transform:scaleX(1.0695);-webkit-text-stroke:0.4px #fbfbfb;">Logical group association</span>
<span class="t" id="t96" style="top:897.5px;font-size:26px;color:#fbfbfb;left:2998.5px;transform-origin:0 0;transform:scaleX(1.0810);-webkit-text-stroke:0.4px #fbfbfb;">Disable monitoring</span>
<span class="t" id="t97" style="top:953.8px;font-size:26px;color:#fbfbfb;left:3000.3px;transform-origin:0 0;transform:scaleX(1.0731);-webkit-text-stroke:0.4px #fbfbfb;">Temporary deletion</span>
<span class="t" id="t98" style="top:1009.9px;font-size:26px;color:#fbfbfb;left:2998.5px;transform-origin:0 0;transform:scaleX(1.0739);-webkit-text-stroke:0.4px #fbfbfb;">Permanent deletion</span>
<span class="t" id="t99" style="top:1099.2px;font-size:26px;color:#77787c;left:2998.6px;transform-origin:0 0;transform:scaleX(1.0514);-webkit-text-stroke:0.4px #77787c;">Entity type: DSM</span>
<span class="t" id="t100" style="top:15.2px;font-size:25px;color:#ffffff;font-weight:700;left:3222.6px;transform-origin:50% 0;transform:translateX(-50%);">1</span></div>
</body></html>
